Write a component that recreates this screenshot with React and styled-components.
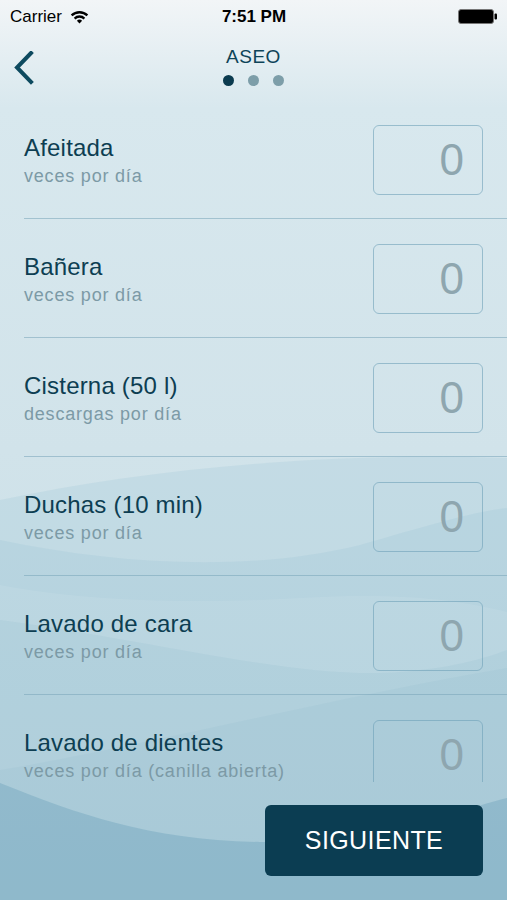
import React from "react";
import styled, { createGlobalStyle } from "styled-components";

const GlobalStyle = createGlobalStyle`
    html, body {
        margin: 0;
        padding: 0;
    }
    body {
        font-family: "Liberation Sans", Arial, sans-serif;
        background: #d2e4eb;
    }
    * {
        box-sizing: border-box;
    }
`;

const items = [
    { title: "Afeitada", unit: "veces por día" },
    { title: "Bañera", unit: "veces por día" },
    { title: "Cisterna (50 l)", unit: "descargas por día" },
    { title: "Duchas (10 min)", unit: "veces por día" },
    { title: "Lavado de cara", unit: "veces por día" },
    { title: "Lavado de dientes", unit: "veces por día (canilla abierta)" },
];

const Screen = styled.div`
    position: relative;
    width: 507px;
    height: 900px;
    overflow: hidden;
`;

const BackgroundArt = styled.svg`
    position: absolute;
    inset: 0;
    z-index: 0;
`;

const Content = styled.div`
    position: relative;
    z-index: 1;
    display: flex;
    flex-direction: column;
    height: 100%;
`;

const StatusBar = styled.div`
    height: 33px;
    display: grid;
    grid-template-columns: 1fr auto 1fr;
    align-items: center;
    padding: 0 9px 0 10px;
    font-size: 17px;
    color: #000;
    .left {
        display: flex;
        align-items: center;
        gap: 8px;
    }
    .time {
        font-weight: bold;
    }
    .right {
        display: flex;
        justify-content: flex-end;
    }
`;

const NavBar = styled.div`
    height: 67px;
    display: grid;
    grid-template-columns: 60px 1fr 60px;
    align-items: start;
`;

const BackButton = styled.button`
    border: none;
    background: none;
    padding: 0;
    margin: 18px 0 0 11px;
    width: 26px;
    height: 34px;
    cursor: pointer;
`;

const TitleBlock = styled.div`
    display: flex;
    flex-direction: column;
    align-items: center;
    padding-top: 13px;
    h1 {
        margin: 0;
        font-size: 19px;
        font-weight: normal;
        line-height: 22px;
        letter-spacing: 0.5px;
        color: #0e4458;
    }
`;

const Dots = styled.div`
    display: flex;
    gap: 14px;
    margin-top: 7px;
`;

const Dot = styled.span`
    width: 11px;
    height: 11px;
    border-radius: 50%;
    background: ${({ active }) => (active ? "#0b3b4f" : "#7d9ea9")};
`;

const List = styled.div`
    height: 682px;
    overflow: hidden;
`;

const Row = styled.div`
    display: flex;
    justify-content: space-between;
    align-items: flex-start;
    height: 119px;
    margin-left: 24px;
    padding-right: 24px;
    border-bottom: 1px solid rgba(120, 164, 184, 0.55);
`;

const Labels = styled.div`
    padding-top: 34px;
    .title {
        font-size: 24px;
        line-height: 28px;
        color: #0d3e52;
        letter-spacing: 0.2px;
    }
    .unit {
        margin-top: 3px;
        font-size: 18px;
        line-height: 22px;
        letter-spacing: 0.8px;
        color: #7c9aa6;
    }
`;

const Counter = styled.div`
    margin-top: 25px;
    width: 110px;
    height: 70px;
    border: 1px solid rgba(110, 160, 184, 0.6);
    border-radius: 6px;
    display: flex;
    align-items: center;
    justify-content: flex-end;
    padding-right: 18px;
    font-size: 44px;
    color: #8ea6af;
`;

const Footer = styled.div`
    display: flex;
    justify-content: flex-end;
    padding: 23px 24px 0 0;
`;

const NextButton = styled.button`
    width: 218px;
    height: 71px;
    border: none;
    border-radius: 6px;
    background: #0b3d52;
    color: #fff;
    font-family: "Liberation Sans", Arial, sans-serif;
    font-size: 25px;
    letter-spacing: 0.4px;
    cursor: pointer;
`;

function Background() {
    return (
        <BackgroundArt width="507" height="900" viewBox="0 0 507 900">
            <defs>
                <linearGradient id="bg" x1="0" y1="0" x2="0" y2="1">
                    <stop offset="0" stopColor="#f2f5f7" />
                    <stop offset="0.12" stopColor="#d8e8ee" />
                    <stop offset="0.5" stopColor="#d1e3ea" />
                    <stop offset="1" stopColor="#c4dce5" />
                </linearGradient>
            </defs>
            <rect width="507" height="900" fill="url(#bg)" />
            <path d="M0,500 C150,468 330,452 507,458 V900 H0Z" fill="#5d9bb8" opacity="0.1" />
            <path d="M0,540 C120,565 250,572 360,545 C420,528 470,512 507,508 V900 H0Z" fill="#5d9bb8" opacity="0.09" />
            <path d="M0,585 C80,600 180,605 300,598 C400,592 460,600 507,612 V900 H0Z" fill="#ffffff" opacity="0.08" />
            <path d="M0,620 C150,640 300,680 400,672 C450,668 480,660 507,650 V900 H0Z" fill="#5d9bb8" opacity="0.08" />
            <path d="M0,770 C150,745 320,700 507,668 V900 H0Z" fill="#5d9bb8" opacity="0.07" />
            <path d="M0,783 C80,815 150,840 260,842 C380,844 450,812 507,798 V900 H0Z" fill="#4a8cab" opacity="0.26" />
        </BackgroundArt>
    );
}

function WifiIcon() {
    return (
        <svg width="19" height="14" viewBox="0 0 19 14">
            <path d="M0.8,4.6 A12.5,12.5 0 0 1 18.2,4.6 L16.6,6.3 A10.2,10.2 0 0 0 2.4,6.3 Z" fill="#000" />
            <path d="M3.8,7.7 A8,8 0 0 1 15.2,7.7 L13.6,9.4 A5.7,5.7 0 0 0 5.4,9.4 Z" fill="#000" />
            <path d="M6.9,10.8 A3.6,3.6 0 0 1 12.1,10.8 L9.5,13.6 Z" fill="#000" />
        </svg>
    );
}

function Battery() {
    return (
        <svg width="40" height="16" viewBox="0 0 40 16">
            <rect x="0.5" y="0.5" width="35" height="14" rx="2.5" fill="#000" stroke="#777" />
            <rect x="36.5" y="4.5" width="2.5" height="6" rx="1" fill="#000" />
        </svg>
    );
}

export default function App() {
    return (
        <>
            <GlobalStyle />
            <Screen>
                <Background />
                <Content>
                    <StatusBar>
                        <div className="left">
                            <span>Carrier</span>
                            <WifiIcon />
                        </div>
                        <span className="time">7:51 PM</span>
                        <div className="right">
                            <Battery />
                        </div>
                    </StatusBar>
                    <NavBar>
                        <BackButton aria-label="Volver">
                            <svg width="26" height="34" viewBox="0 0 26 34">
                                <path d="M20,2 L6,16.5 L20,31" fill="none" stroke="#0d4a5f" strokeWidth="4" strokeLinecap="square" />
                            </svg>
                        </BackButton>
                        <TitleBlock>
                            <h1>ASEO</h1>
                            <Dots>
                                <Dot active />
                                <Dot />
                                <Dot />
                            </Dots>
                        </TitleBlock>
                        <div />
                    </NavBar>
                    <List>
                        {items.map((item) => (
                            <Row key={item.title}>
                                <Labels>
                                    <div className="title">{item.title}</div>
                                    <div className="unit">{item.unit}</div>
                                </Labels>
                                <Counter>0</Counter>
                            </Row>
                        ))}
                    </List>
                    <Footer>
                        <NextButton>SIGUIENTE</NextButton>
                    </Footer>
                </Content>
            </Screen>
        </>
    );
}
